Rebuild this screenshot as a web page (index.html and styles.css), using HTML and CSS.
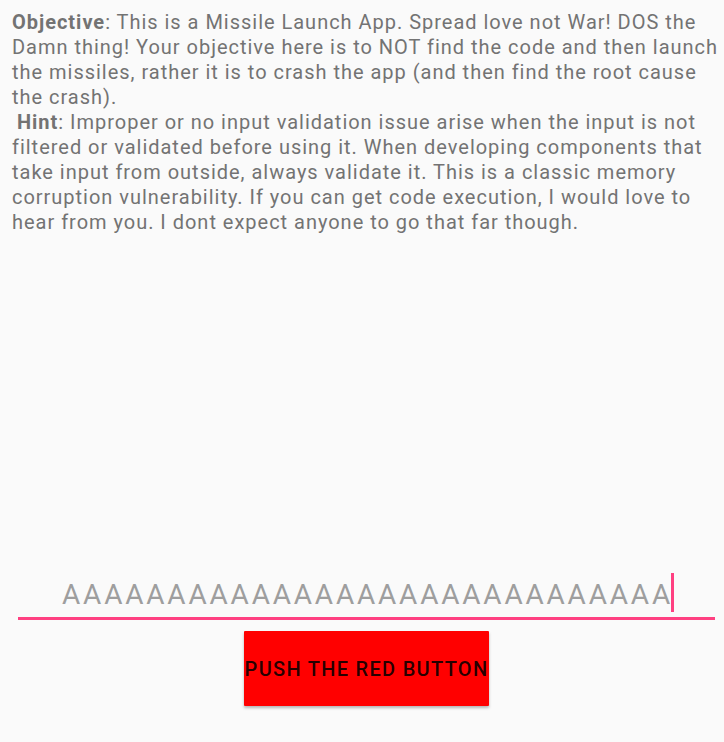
FILE: index.html
```html
<!DOCTYPE html>
<html lang="en">
<head>
<meta charset="utf-8">
<title>Missile Launch App</title>
<link rel="stylesheet" href="styles.css">
</head>
<body>
<main class="screen">
  <section class="intro">
    <p class="para"><b>Objective</b>: This is a Missile Launch App. Spread love not War! DOS the Damn thing! Your objective here is to NOT find the code and then launch the missiles, rather it is to crash the app (and then find the root cause the crash).</p>
    <p class="para hint"><b>Hint</b>: Improper or no input validation issue arise when the input is not filtered or validated before using it. When developing components that take input from outside, always validate it. This is a classic memory corruption vulnerability. If you can get code execution, I would love to hear from you. I dont expect anyone to go that far though.</p>
  </section>
  <form class="launch">
    <div class="field"><span class="value">AAAAAAAAAAAAAAAAAAAAAAAAAAAAA</span><span class="caret"></span></div>
    <button type="button" class="red-btn">PUSH THE RED BUTTON</button>
  </form>
</main>
</body>
</html>
```
FILE: styles.css
```css
html, body {
  margin: 0;
  padding: 0;
  background: #fafafa;
}

body {
  font-family: Roboto, "Noto Sans", "Liberation Sans", sans-serif;
}

.screen {
  display: flex;
  flex-direction: column;
  height: 742px;
  box-sizing: border-box;
}

.intro {
  padding: 10px 2px 0 12px;
}

.para {
  margin: 0;
  font-size: 20px;
  line-height: 25px;
  letter-spacing: 0.98px;
  color: #737373;
}

.para b {
  font-weight: 700;
}

.hint {
  text-indent: 5px;
}

.launch {
  margin: auto 0 0;
  padding: 0 9px 36px 18px;
  display: flex;
  flex-direction: column;
  align-items: center;
}

.field {
  align-self: stretch;
  text-align: center;
  font-size: 28px;
  line-height: 34px;
  letter-spacing: 2.8px;
  color: #9e9e9e;
  padding-bottom: 5px;
  border-bottom: 3px solid #ff4081;
  white-space: nowrap;
}

.caret {
  display: inline-block;
  width: 3px;
  height: 39px;
  background: #ff4081;
  vertical-align: -6px;
  margin: -6px -3px -2px -2px;
}

.red-btn {
  margin-top: 11px;
  width: 245px;
  height: 75px;
  padding: 0;
  border: none;
  border-radius: 1px;
  background: #ff0000;
  color: rgba(0, 0, 0, 0.87);
  font-family: Roboto, "Noto Sans", "Liberation Sans", sans-serif;
  font-weight: 500;
  font-size: 20px;
  letter-spacing: 1.3px;
  white-space: nowrap;
  box-shadow: 0 2px 3px rgba(0, 0, 0, 0.28);
  display: flex;
  align-items: center;
  justify-content: center;
}
```
